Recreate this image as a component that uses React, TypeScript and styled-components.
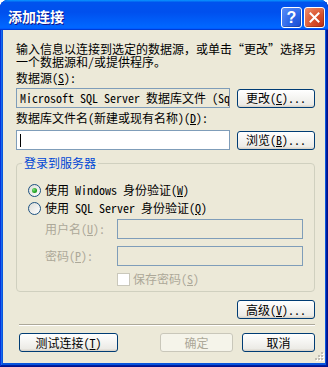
import React from "react";
import styled, { createGlobalStyle } from "styled-components";

const FONT = `"Noto Sans Mono CJK SC", "Noto Sans CJK SC", sans-serif`;

const Global = createGlobalStyle`
  html, body { margin: 0; padding: 0; background: #ffffff; }
  body { font-family: ${FONT}; font-size: 12px; color: #000; }
  * { box-sizing: border-box; }
`;

const Window = styled.div`
  width: 328px;
  height: 367px;
  display: flex;
  flex-direction: column;
  border-radius: 8px 8px 0 0;
  overflow: hidden;
  background: #0855dd;
  box-shadow: inset -1px -1px #00138c, inset 1px 1px #0831d9, inset -2px -2px #001ea0,
    inset 2px 2px #166aee;
`;

const TitleBar = styled.div`
  height: 30px;
  flex: none;
  display: flex;
  align-items: center;
  justify-content: space-between;
  padding: 0 3px 0 8px;
  background: linear-gradient(180deg, #0997ff, #0053ee 8%, #0050ee 40%, #0066ff 88%, #0066ff 93%, #005bff 95%, #003dd7 96%, #003dd7);
`;

const Title = styled.div`
  color: #fff;
  font-family: "Noto Sans CJK SC", sans-serif;
  font-weight: 700;
  font-size: 14px;
  line-height: 16px;
  text-shadow: 1px 1px #0f1089;
  padding-top: 1px;
`;

const TitleButtons = styled.div`
  display: flex;
  gap: 2px;
  margin-top: 5px;
`;

const CaptionButton = styled.div<{ $kind: "help" | "close" }>`
  width: 21px;
  height: 21px;
  border: 1px solid #fff;
  border-radius: 3px;
  display: flex;
  align-items: center;
  justify-content: center;
  color: #fff;
  font-family: "Liberation Sans", sans-serif;
  font-weight: 700;
  font-size: 16px;
  background: ${(p) =>
    p.$kind === "help"
      ? "radial-gradient(circle at 90% 90%, #1e51d6 0%, #2d68ea 45%, #5c90f8 100%)"
      : "radial-gradient(circle at 90% 90%, #c4341a 0%, #d9512c 45%, #ee9170 100%)"};
  box-shadow: inset -1px -1px rgba(0, 0, 0, 0.2);
`;

const Client = styled.div`
  flex: 1;
  margin: 0 3px 4px 3px;
  background: #ece9d8;
  padding: 12px 10px 0 13px;
  display: flex;
  flex-direction: column;
  position: relative;
`;

const Intro = styled.div`
  line-height: 13px;
  white-space: nowrap;
`;

const Label = styled.div<{ $top: number }>`
  margin-top: ${(p) => p.$top}px;
  line-height: 12px;
  white-space: nowrap;
`;

const FieldRow = styled.div<{ $top: number }>`
  margin-top: ${(p) => p.$top}px;
  display: flex;
  align-items: center;
  justify-content: space-between;
  height: 20px;
`;

const TextBox = styled.div<{ $read?: boolean; $w?: number }>`
  width: ${(p) => (p.$w ? `${p.$w}px` : "auto")};
  flex: ${(p) => (p.$w ? "none" : "1")};
  height: 20px;
  border: 1px solid #7f9db9;
  background: ${(p) => (p.$read ? "#ece9d8" : "#ffffff")};
  display: flex;
  align-items: center;
  padding-left: 3px;
  white-space: nowrap;
  overflow: hidden;
  line-height: 12px;
`;

const Caret = styled.span`
  width: 1px;
  height: 13px;
  background: #000;
`;

const Button = styled.button<{ $w: number; $disabled?: boolean }>`
  width: ${(p) => p.$w}px;
  height: 19px;
  flex: none;
  padding: 0;
  margin: 0;
  font-family: ${FONT};
  font-size: 12px;
  line-height: 12px;
  white-space: nowrap;
  color: ${(p) => (p.$disabled ? "#aca899" : "#000")};
  border: 1px solid ${(p) => (p.$disabled ? "#c9c7ba" : "#003c74")};
  border-radius: 3px;
  background: ${(p) =>
    p.$disabled ? "#f5f4ea" : "linear-gradient(180deg, #ffffff, #ecebe6 86%, #d6d0c5)"};
  display: flex;
  align-items: center;
  justify-content: center;
`;

const Group = styled.fieldset`
  margin: 7px 0 0 0;
  padding: 12px 11px 4px 11px;
  border: 1px solid #d0d0bf;
  border-radius: 4px;
  min-width: 0;
  display: flex;
  flex-direction: column;
`;

const Legend = styled.legend`
  color: #0046d5;
  padding: 0 2px;
  margin-left: -6px;
  line-height: 12px;
`;

const RadioRow = styled.div`
  height: 18px;
  display: flex;
  align-items: center;
  gap: 4px;
  white-space: nowrap;
  line-height: 12px;
`;

const RadioMark = styled.span<{ $checked?: boolean }>`
  width: 13px;
  height: 13px;
  flex: none;
  border-radius: 50%;
  border: 1px solid #1c5180;
  background: linear-gradient(135deg, #dcdcd7, #ffffff);
  display: flex;
  align-items: center;
  justify-content: center;
  &::after {
    content: "";
    display: ${(p) => (p.$checked ? "block" : "none")};
    width: 5px;
    height: 5px;
    border-radius: 50%;
    background: radial-gradient(circle at 35% 35%, #7ee07e, #21a121 60%, #168416);
  }
`;

const CredRow = styled.div<{ $top: number }>`
  margin-top: ${(p) => p.$top}px;
  display: flex;
  align-items: center;
  padding-left: 17px;
  height: 20px;
`;

const DimLabel = styled.span`
  width: 72px;
  flex: none;
  color: #aca899;
  white-space: nowrap;
  line-height: 12px;
`;

const CheckRow = styled.div`
  margin-top: 5px;
  height: 16px;
  display: flex;
  align-items: center;
  padding-left: 89px;
  gap: 3px;
  color: #aca899;
  line-height: 12px;
  white-space: nowrap;
`;

const CheckMark = styled.span`
  width: 13px;
  height: 13px;
  flex: none;
  border: 1px solid #cac8bb;
  background: #ffffff;
`;

const RightRow = styled.div`
  margin-top: 8px;
  display: flex;
  justify-content: flex-end;
`;

const Separator = styled.div`
  margin-top: 5px;
  margin-left: 3px;
  height: 2px;
  border-top: 1px solid #aca899;
  border-bottom: 1px solid #ffffff;
`;

const ButtonBar = styled.div`
  margin-top: 7px;
  display: flex;
  justify-content: space-between;
  padding-left: 3px;
`;

const ButtonGroup = styled.div`
  display: flex;
  gap: 9px;
`;

const Grip = styled.svg`
  position: absolute;
  right: 1px;
  bottom: 1px;
`;

const U = styled.u`
  text-underline-offset: 1px;
`;

function CloseGlyph() {
  return (
    <svg width="11" height="11" viewBox="0 0 11 11">
      <path d="M1.5 1.5 L9.5 9.5 M9.5 1.5 L1.5 9.5" stroke="#fff" strokeWidth="2" strokeLinecap="square" />
    </svg>
  );
}

export default function App() {
  return (
    <>
      <Global />
      <Window>
        <TitleBar>
          <Title>添加连接</Title>
          <TitleButtons>
            <CaptionButton $kind="help">?</CaptionButton>
            <CaptionButton $kind="close">
              <CloseGlyph />
            </CaptionButton>
          </TitleButtons>
        </TitleBar>
        <Client>
          <Intro>
            输入信息以连接到选定的数据源，或单击“更改”选择另
            <br />
            一个数据源和/或提供程序。
          </Intro>
          <Label $top={4}>
            数据源(<U>S</U>):
          </Label>
          <FieldRow $top={4}>
            <TextBox $read $w={214}>Microsoft SQL Server 数据库文件 (Sq</TextBox>
            <Button $w={78}>
              更改(<U>C</U>)...
            </Button>
          </FieldRow>
          <Label $top={4}>
            数据库文件名(新建或现有名称)(<U>D</U>):
          </Label>
          <FieldRow $top={6}>
            <TextBox $w={214}>
              <Caret />
            </TextBox>
            <Button $w={78}>
              浏览(<U>B</U>)...
            </Button>
          </FieldRow>
          <Group>
            <Legend>登录到服务器</Legend>
            <RadioRow>
              <RadioMark $checked />
              <span>
                使用 Windows 身份验证(<U>W</U>)
              </span>
            </RadioRow>
            <RadioRow>
              <RadioMark />
              <span>
                使用 SQL Server 身份验证(<U>Q</U>)
              </span>
            </RadioRow>
            <CredRow $top={2}>
              <DimLabel>
                用户名(<U>U</U>):
              </DimLabel>
              <TextBox $read />
            </CredRow>
            <CredRow $top={7}>
              <DimLabel>
                密码(<U>P</U>):
              </DimLabel>
              <TextBox $read />
            </CredRow>
            <CheckRow>
              <CheckMark />
              <span>
                保存密码(<U>S</U>)
              </span>
            </CheckRow>
          </Group>
          <RightRow>
            <Button $w={78}>
              高级(<U>V</U>)...
            </Button>
          </RightRow>
          <Separator />
          <ButtonBar>
            <Button $w={99}>
              测试连接(<U>T</U>)
            </Button>
            <ButtonGroup>
              <Button $w={73} $disabled>
                确定
              </Button>
              <Button $w={73}>取消</Button>
            </ButtonGroup>
          </ButtonBar>
          <Grip width="10" height="10" viewBox="0 0 10 10">
            {[
              [8, 0],
              [8, 3],
              [5, 3],
              [8, 6],
              [5, 6],
              [2, 6],
            ].map(([x, y]) => (
              <g key={`${x}-${y}`}>
                <rect x={x} y={y + 1} width="2" height="2" fill="#ffffff" />
                <rect x={x - 1} y={y} width="2" height="2" fill="#c1beb3" />
              </g>
            ))}
          </Grip>
        </Client>
      </Window>
    </>
  );
}
